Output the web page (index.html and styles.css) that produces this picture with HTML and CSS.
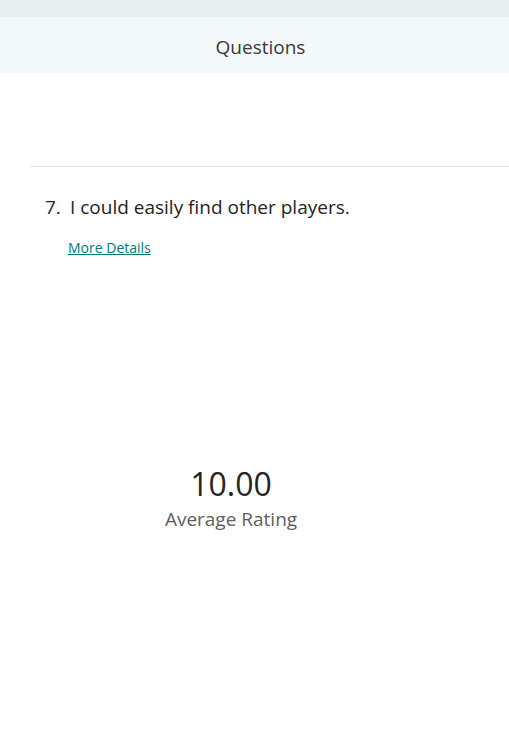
FILE: index.html
```html
<!DOCTYPE html>
<html>
<head>
<meta charset="utf-8">
<link rel="stylesheet" href="styles.css">
</head>
<body>
<div class="topband"></div>
<header class="header">Questions</header>
<main class="content">
  <div class="spacer"></div>
  <section class="question">
    <div class="q-title"><span class="q-num">7.</span><span class="q-text">I could easily find other players.</span></div>
    <a class="details" href="#">More Details</a>
    <div class="stat">
      <div class="stat-value">10.00</div>
      <div class="stat-label">Average Rating</div>
    </div>
  </section>
</main>
</body>
</html>
```
FILE: styles.css
```css
html, body {
  margin: 0;
  padding: 0;
  background: #ffffff;
  font-family: "Open Sans", "Noto Sans", sans-serif;
  color: #252423;
}
.topband {
  height: 17px;
  background: #e8eff1;
}
.header {
  height: 56px;
  box-sizing: border-box;
  padding-top: 3px;
  background: #f3f8f8;
  display: flex;
  align-items: center;
  justify-content: center;
  font-size: 19px;
  color: #3b3a39;
  padding-left: 12px;
}
.content {
  padding-left: 30px;
}
.spacer {
  height: 93px;
  border-bottom: 1px solid #e6e6e6;
}
.question {
  padding-top: 28px;
}
.q-title {
  font-size: 19px;
  line-height: 24px;
  display: flex;
  padding-left: 15px;
}
.q-num {
  width: 25px;
}
.details {
  display: inline-block;
  margin-left: 38px;
  margin-top: 19px;
  font-size: 14px;
  color: #03787c;
  text-decoration: underline;
}
.stat {
  width: 402px;
  margin-top: 206px;
  text-align: center;
}
.stat-value {
  font-size: 32px;
  line-height: 40px;
  color: #252423;
}
.stat-label {
  margin-top: 2px;
  font-size: 19px;
  line-height: 26px;
  color: #605e5c;
}
```
